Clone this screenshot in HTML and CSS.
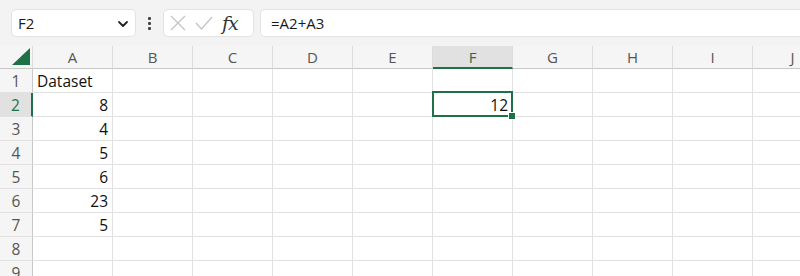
FILE: index.html
```html
<!DOCTYPE html>
<html>
<head>
<meta charset="utf-8">
<link rel="stylesheet" href="styles.css">
</head>
<body>
<div class="toolbar">
  <div class="namebox">
    <span class="name">F2</span>
    <svg class="chev" width="12" height="8" viewBox="0 0 12 8"><path d="M2 2 L6 6 L10 2" fill="none" stroke="#222" stroke-width="1.8" stroke-linecap="round" stroke-linejoin="round"/></svg>
  </div>
  <div class="dots"><i></i><i></i><i></i></div>
  <div class="fxbox">
    <svg width="18" height="18" viewBox="0 0 18 18"><path d="M2 2 L16 16 M16 2 L2 16" stroke="#c4c4c4" stroke-width="1.3" fill="none"/></svg>
    <svg width="20" height="18" viewBox="0 0 20 18"><path d="M2 9 L7.5 15 L18 3" stroke="#c4c4c4" stroke-width="1.3" fill="none"/></svg>
    <span class="fx">fx</span>
  </div>
  <div class="formula">=A2+A3</div>
</div>
<div class="sheet">
  <div class="hdr corner"><svg width="18" height="17" viewBox="0 0 18 17"><path d="M18 0 L18 17 L0 17 Z" fill="#1e7145"/></svg></div>
  <div class="hdr col">A</div><div class="hdr col">B</div><div class="hdr col">C</div><div class="hdr col">D</div><div class="hdr col">E</div><div class="hdr col active">F</div><div class="hdr col">G</div><div class="hdr col">H</div><div class="hdr col">I</div><div class="hdr col">J</div>

  <div class="rh">1</div><div class="c">Dataset</div><div class="c"></div><div class="c"></div><div class="c"></div><div class="c"></div><div class="c"></div><div class="c"></div><div class="c"></div><div class="c"></div><div class="c"></div>
  <div class="rh active">2</div><div class="c n">8</div><div class="c"></div><div class="c"></div><div class="c"></div><div class="c"></div><div class="c n selcell">12<span class="sel"></span><span class="handle"></span></div><div class="c"></div><div class="c"></div><div class="c"></div><div class="c"></div>
  <div class="rh">3</div><div class="c n">4</div><div class="c"></div><div class="c"></div><div class="c"></div><div class="c"></div><div class="c"></div><div class="c"></div><div class="c"></div><div class="c"></div><div class="c"></div>
  <div class="rh">4</div><div class="c n">5</div><div class="c"></div><div class="c"></div><div class="c"></div><div class="c"></div><div class="c"></div><div class="c"></div><div class="c"></div><div class="c"></div><div class="c"></div>
  <div class="rh">5</div><div class="c n">6</div><div class="c"></div><div class="c"></div><div class="c"></div><div class="c"></div><div class="c"></div><div class="c"></div><div class="c"></div><div class="c"></div><div class="c"></div>
  <div class="rh">6</div><div class="c n">23</div><div class="c"></div><div class="c"></div><div class="c"></div><div class="c"></div><div class="c"></div><div class="c"></div><div class="c"></div><div class="c"></div><div class="c"></div>
  <div class="rh">7</div><div class="c n">5</div><div class="c"></div><div class="c"></div><div class="c"></div><div class="c"></div><div class="c"></div><div class="c"></div><div class="c"></div><div class="c"></div><div class="c"></div>
  <div class="rh">8</div><div class="c"></div><div class="c"></div><div class="c"></div><div class="c"></div><div class="c"></div><div class="c"></div><div class="c"></div><div class="c"></div><div class="c"></div><div class="c"></div>
  <div class="rh">9</div><div class="c"></div><div class="c"></div><div class="c"></div><div class="c"></div><div class="c"></div><div class="c"></div><div class="c"></div><div class="c"></div><div class="c"></div><div class="c"></div>
</div>
</body>
</html>
```

FILE: styles.css
```css
html, body {
  margin: 0;
  padding: 0;
  width: 800px;
  height: 276px;
  overflow: hidden;
  background: #f3f3f3;
  font-family: "Open Sans", "Noto Sans", sans-serif;
  color: #1a1a1a;
}
.toolbar {
  height: 46px;
  display: flex;
  align-items: flex-start;
  padding: 9px 0 0 11px;
  box-sizing: border-box;
  background: #f3f3f3;
}
.namebox {
  width: 125px;
  height: 28px;
  box-sizing: border-box;
  background: #fff;
  border: 1px solid #e3e3e3;
  border-radius: 5px;
  display: flex;
  align-items: center;
  justify-content: space-between;
  padding: 0 6px 0 6px;
}
.name { font-size: 15px; }
.chev { margin-top: 1px; }
.dots {
  width: 27px;
  height: 28px;
  display: flex;
  flex-direction: column;
  align-items: center;
  justify-content: center;
  gap: 2px;
}
.dots i {
  width: 3px;
  height: 3px;
  background: #444;
  border-radius: 1px;
}
.fxbox {
  width: 91px;
  height: 28px;
  box-sizing: border-box;
  background: #fff;
  border: 1px solid #e3e3e3;
  border-radius: 5px;
  display: flex;
  align-items: center;
  padding: 0 0 0 5px;
  gap: 7px;
}
.fx {
  font-family: "DejaVu Serif", "Liberation Serif", serif;
  font-style: italic;
  font-size: 19px;
  color: #333;
  margin-left: 1px;
  letter-spacing: -1px;
}
.formula {
  margin-left: 6px;
  flex: 1;
  height: 28px;
  box-sizing: border-box;
  background: #fff;
  border: 1px solid #e3e3e3;
  border-right: none;
  border-radius: 5px 0 0 5px;
  font-size: 15px;
  line-height: 26px;
  padding-left: 10px;
}
.sheet {
  display: grid;
  grid-template-columns: 33px repeat(10, 80px);
  grid-template-rows: 23px;
  grid-auto-rows: 24px;
  background: #fff;
  font-size: 15px;
}
.hdr {
  background: #f5f5f5;
  border-bottom: 1px solid #c8c8c8;
  box-sizing: border-box;
  display: flex;
  align-items: center;
  justify-content: center;
  color: #555;
  font-size: 15px;
}
.hdr.col { border-right: 1px solid #dcdcdc; }
.hdr.corner {
  border-right: 1px solid #dcdcdc;
  justify-content: flex-end;
  align-items: flex-end;
  padding: 0 2px 3px 0;
}
.hdr.active {
  background: #e1e1e1;
  color: #1e7145;
  border-bottom: 2px solid #1e7145;
}
.rh {
  background: #f5f5f5;
  border-right: 1px solid #c8c8c8;
  border-bottom: 1px solid #e1e1e1;
  box-sizing: border-box;
  display: flex;
  align-items: center;
  justify-content: center;
  color: #555;
  font-size: 15.5px;
}
.rh.active {
  background: #e1e1e1;
  color: #1e7145;
  border-right: 2px solid #1e7145;
}
.c {
  border-right: 1px solid #e1e1e1;
  border-bottom: 1px solid #e1e1e1;
  box-sizing: border-box;
  display: flex;
  align-items: center;
  padding: 0 4px;
  color: #111;
  white-space: nowrap;
  font-size: 15.5px;
}
.c.n { justify-content: flex-end; }
.selcell { position: relative; }
.sel {
  position: absolute;
  left: -1px;
  top: -2px;
  right: -1px;
  bottom: -1px;
  border: 2px solid #1e7145;
}
.handle {
  position: absolute;
  right: -4px;
  bottom: -4px;
  width: 6px;
  height: 6px;
  background: #1e7145;
  border: 1px solid #fff;
}
```
